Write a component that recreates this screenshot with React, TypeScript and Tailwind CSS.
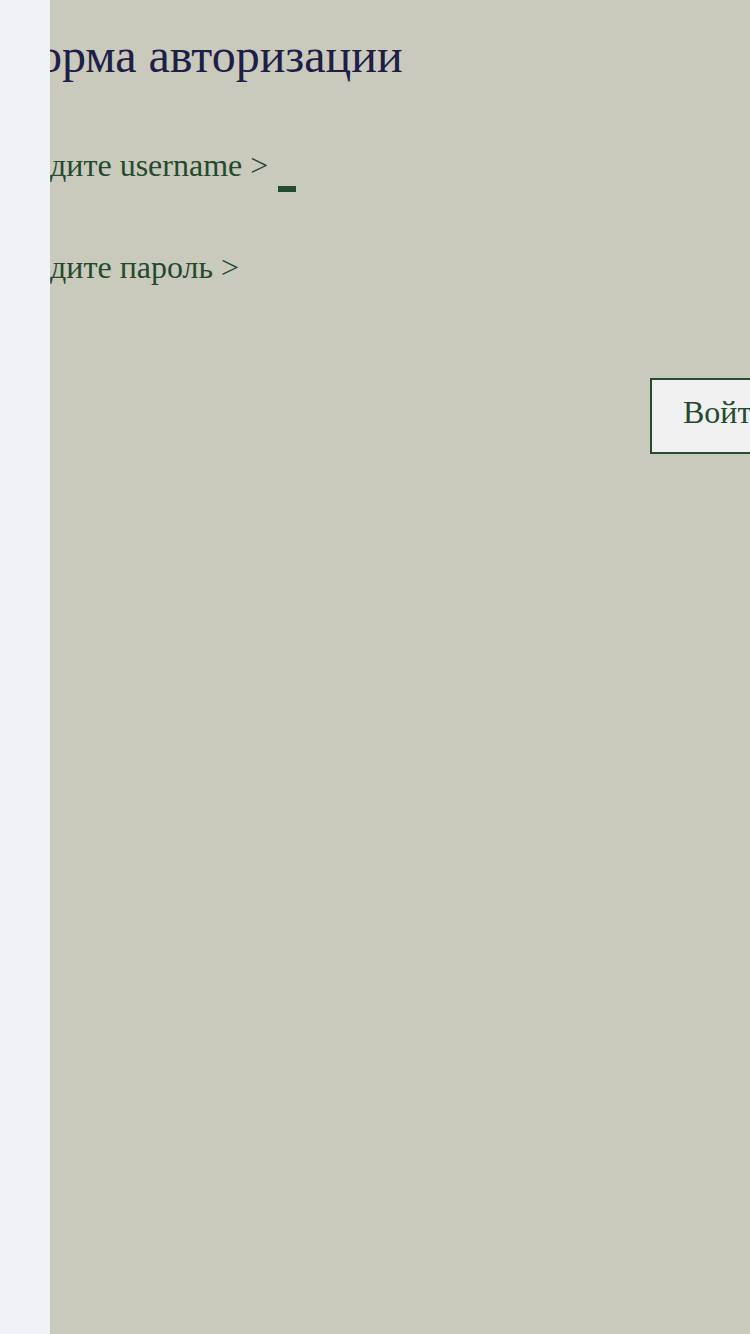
export default function App() {
  return (
    <div className="flex min-h-screen font-['Liberation_Serif',serif]">
      <aside className="w-[50px] shrink-0 bg-[#eef3f6]" />

      <main className="flex-1 overflow-hidden bg-[#c9c9bc]">
        <div className="-ml-[50px] w-[800px]">
          <h1 className="pt-[28px] text-[48px] leading-[normal] text-[#1e1e48]">
            Форма авторизации
          </h1>

          <div className="mt-[64px] flex items-start text-[32px] leading-[normal] text-[#244a30]">
            <label>Введите username &gt;</label>
            <span className="ml-[10px] mt-[39px] h-[6px] w-[18px] bg-[#244a30]" />
          </div>

          <div className="mt-[57px] text-[32px] leading-[normal] text-[#244a30]">
            <label>Введите пароль &gt;</label>
          </div>

          <button className="ml-[650px] mt-[92px] border-2 border-[#244a30] bg-[#f0f0f0] px-[31px] pb-[21px] pt-[14px] text-[32px] leading-[normal] text-[#244a30]">
            Войти
          </button>
        </div>
      </main>
    </div>
  )
}
